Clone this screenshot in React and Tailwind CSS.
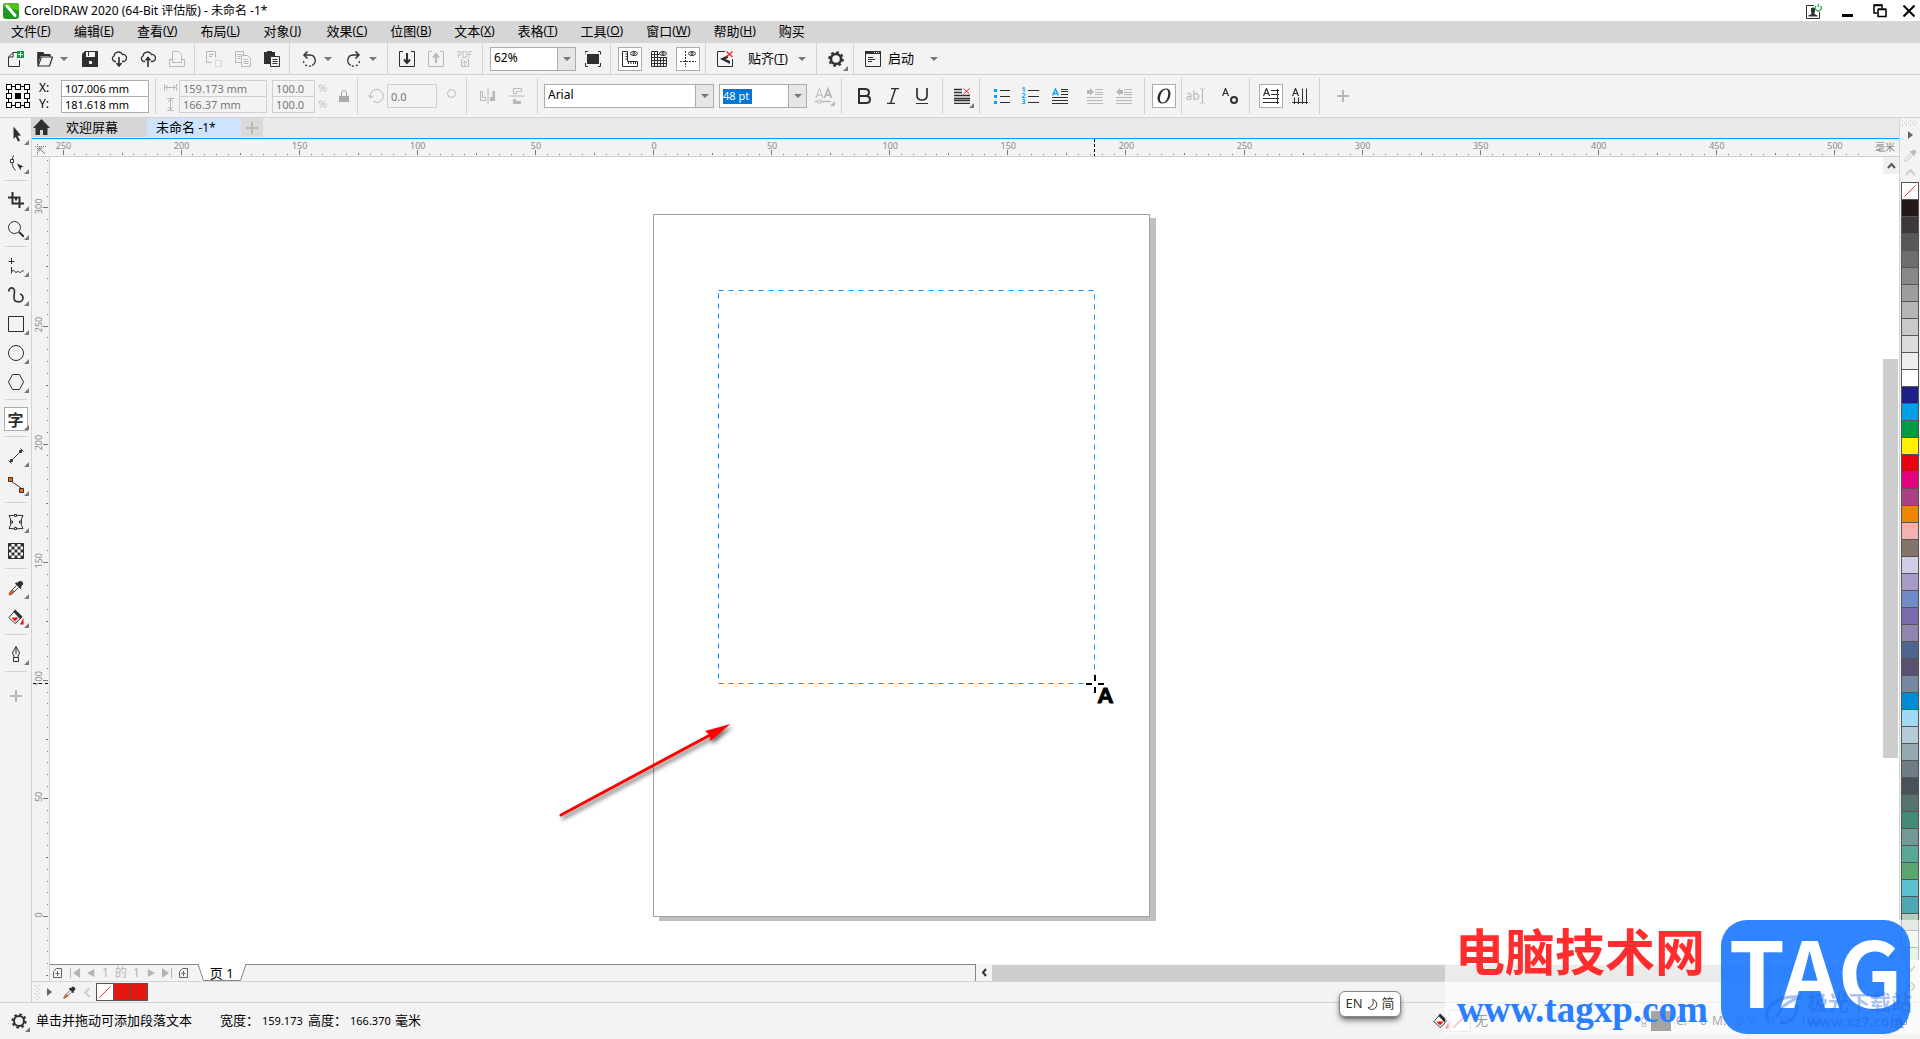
import React from 'react'

const fontStack = "font-['Noto_Sans','Noto_Sans_CJK_SC',sans-serif]"

const menus = [
  ['文件', 'F'], ['编辑', 'E'], ['查看', 'V'], ['布局', 'L'], ['对象', 'J'], ['效果', 'C'], ['位图', 'B'],
  ['文本', 'X'], ['表格', 'T'], ['工具', 'O'], ['窗口', 'W'], ['帮助', 'H'], ['购买', null],
]

const palette = [
  '#231a16', '#3e3838', '#595757', '#6e6e6d', '#888888', '#9d9f9e', '#b4b6b5', '#c8cac9', '#dcdcdc', '#eeeeee',
  '#ffffff', '#1d2087', '#00a0e9', '#009944', '#fff100', '#e60012', '#e4007f', '#ae3f83', '#ef8500', '#f3b1b1',
  '#85746a', '#d0cde6', '#a69ac9', '#718bc6', '#7b6aad', '#9085ac', '#50648f', '#5b516e', '#75889f', '#008bd8',
  '#9fd9f6', '#b5cbd8', '#97a9b1', '#6f7e86', '#4a5259', '#57736f', '#438a78', '#719a96', '#57a896', '#5ba570',
  '#5ec1d0', '#4ea8b3', '#b9cdbc', '#dcefe0', '#c4e3c4', '#a8d08d',
]

const Ico = ({ children, size = 16, box = 16, className = 'text-[#2f2f2f]' }) => (
  <svg
    width={size}
    height={size}
    viewBox={`0 0 ${box} ${box}`}
    fill="none"
    stroke="currentColor"
    strokeWidth="1"
    className={`shrink-0 ${className}`}
    aria-hidden="true"
  >
    {children}
  </svg>
)

const Dim = (props) => <Ico {...props} className="text-[#b8b8b8]" />

const Gear = ({ cx = 8, cy = 8, r = 5, w = 3 }) => (
  <g>
    <circle cx={cx} cy={cy} r={r} strokeWidth={w} />
    <circle cx={cx} cy={cy} r={r + w / 2 + 0.6} strokeWidth="2" strokeDasharray={`${((r + w / 2 + 0.6) * Math.PI) / 8}`} />
  </g>
)

const Btn = ({ label, boxed, children }) => (
  <button type="button" aria-label={label} className="flex h-[29px] w-[29px] shrink-0 items-center justify-center">
    {boxed ? (
      <span className="flex h-6 w-6 items-center justify-center border border-[#acacac] bg-white">{children}</span>
    ) : children}
  </button>
)

const Caret = ({ label = '展开' }) => (
  <button type="button" aria-label={label} className="flex h-6 w-4 shrink-0 items-center pl-px">
    <CaretGlyph />
  </button>
)

const CaretGlyph = () => (
  <svg width="8" height="4" viewBox="0 0 8 4" className="fill-[#777]" aria-hidden="true"><path d="M0 0h8L4 4z" /></svg>
)

const Corner = ({ className }) => (
  <svg width="5" height="5" viewBox="0 0 4 4" className={`absolute fill-[#777] ${className}`} aria-hidden="true"><path d="M4 0v4H0z" /></svg>
)

const Sep = () => <span className="mr-1 ml-[3px] w-px shrink-0 self-stretch bg-[#d4d4d4]" />

const Eyedropper = ({ dim }) => (
  <>
    <path d="M10 2.500c1.500-3 6-1 5 2l-2 2 .5 1.500-1 1-5.500-5.500 1-1z" fill={dim ? '#bbb' : '#2f2f2f'} stroke="none" />
    <path d="M8.500 5.500L2 12l-1 3 3-1 6.500-6.500" stroke={dim ? '#bbb' : '#444'} />
    {!dim && <path d="M5.500 10.500L1.500 14.500" stroke="#d9641e" strokeWidth="2.200" />}
  </>
)

const Bucket = () => (
  <>
    <path d="M7 1.500L1 8.500l6 6 7-6.500z" fill="#fff" />
    <path d="M7 .5l7.500 7-2.500 2.500L5.500 3z" fill="#2f2f2f" stroke="none" />
    <path d="M3.500 8.500h7L7 12.500z" fill="#f00" stroke="none" />
    <path d="M15.500 9v6.500h-3.500z" fill="#f00" stroke="none" />
  </>
)

const tools = [
  ['选择', <path key="a" d="M5.500 .5l7.500 9-3.500.3 2.500 4.700-2 1-2.300-4.800-2.200 2.300z" fill="currentColor" stroke="none" />],
  ['形状', (
    <g key="b">
      <path d="M5.500 .5C3 6 3.500 11 7.500 15.500" />
      <path d="M2.500 4.500h3v3h-3z" fill="#fff" />
      <path d="M9 8.500l6.500 3-2.500 1-.5 3z" fill="currentColor" stroke="none" />
    </g>
  )],
  null,
  ['裁剪', <path key="c" d="M4.500 0v11.500H16M0 5.500h11.500V16M8 5.500v3" strokeWidth="2" />],
  ['缩放', <g key="d"><circle cx="6.500" cy="6.500" r="6" /><path d="M11 11l5 5" strokeWidth="2" /></g>],
  null,
  ['手绘', <path key="e" d="M3.500 0v6M.5 3.500h6M3.500 9v6.500M3.500 14q2-3.500 3-1t2.500 1 2 0 2.500-.5 2.500 0" />],
  ['艺术笔', <path key="f" d="M1 4.500C0 0 6.500-.5 6.500 4c0 2-.5 4-.5 6.500 0 6 9 5.500 9 .5 0-2-1-3.500-3-4" strokeWidth="1.600" />],
  ['矩形', <path key="g" d="M.5.5h15v15H.5z" />],
  ['椭圆形', <circle key="h" cx="8" cy="8" r="7.500" />],
  ['多边形', <path key="i" d="M4.500 .5h7L15.500 8l-4 7.500h-7L.5 8z" />],
  null,
  ['文本', null],
  null,
  ['平行度量', <path key="k" d="M3 13L13 3M.5 12.500l3 3M12.500.5l3 3M2 14l3-1-2-2zM14 2l-3 1 2 2z" />],
  ['连接器', (
    <g key="l">
      <path d="M3 4l10 7" />
      <path d="M.5.5h4v4h-4zM11.500 11.500h4v4h-4z" fill="#f60" />
    </g>
  )],
  null,
  ['变形', (
    <g key="m">
      <path d="M1 1.500q7-.5 14 0-4 6.500 0 13-7 .5-14 0 4-6.500 0-13z" />
      <path d="M6.500.5h2v2h-2zM6.500 13.500h2v2h-2zM2.500 7h2v2h-2zM11.500 7h2v2h-2z" fill="#fff" />
    </g>
  )],
  ['透明度', (
    <g key="n">
      <path d="M.5.5h15v15H.5z" fill="#fff" />
      {[0, 1, 2, 3, 4].map((r) => [0, 1, 2, 3, 4].map((c) => (r + c) % 2 === 0 && (
        <path key={`${r}${c}`} d={`M${0.5 + c * 3} ${0.5 + r * 3}h3v3h-3z`} fill="currentColor" stroke="none" />
      )))}
    </g>
  )],
  null,
  ['颜色滴管', <Eyedropper key="o" />],
  ['交互式填充', <Bucket key="p" />],
  null,
  ['轮廓笔', <path key="q" d="M8 .5L4.500 7 6.500 11.500h3L11.500 7zM8 2v6M5.500 11.500h5v4h-5z" />],
  null,
]

const Toolbox = () => (
  <div className="flex w-8 shrink-0 flex-col items-center border-r border-[#d4d4d4] bg-[#f3f3f3] pt-px">
    {tools.map((tool, i) => tool ? (
      <button key={tool[0]} type="button" aria-label={tool[0]} className="relative flex h-[29px] w-[29px] shrink-0 items-center justify-center">
        {tool[1] ? <Ico>{tool[1]}</Ico> : (
          <span className="flex h-6 w-6 items-center justify-center border border-[#acacac] bg-white font-['Noto_Sans_CJK_SC',sans-serif] text-base leading-none font-bold text-[#2f2f2f]">字</span>
        )}
        {tool[0] !== '透明度' && <Corner className="right-px bottom-[3px]" />}
      </button>
    ) : <span key={i} className="mt-[3px] mb-1 h-px w-[22px] shrink-0 bg-[#d4d4d4]" />)}
    <button type="button" aria-label="添加工具" className="mt-[5px] flex h-[29px] items-center">
      <Dim><path d="M8 2v12M2 8h12" strokeWidth="2" /></Dim>
    </button>
  </div>
)

const TitleBar = () => (
  <header className="flex h-[21px] shrink-0 items-center bg-white pr-[5px] pl-[3px]">
    <svg width="16" height="16" viewBox="0 0 16 16" aria-hidden="true">
      <rect width="16" height="16" rx="3" fill="#1f9a20" />
      <path d="M0 3q0-3 3-3h10q3 0 3 3v5z" fill="#4cc21c" />
      <path d="M4 3l8 9.500" stroke="#fff" strokeWidth="3" strokeLinecap="round" />
    </svg>
    <h1 className="ml-[5px] text-xs">CorelDRAW 2020 (64-Bit 评估版) - 未命名 -1*</h1>
    <div className="ml-auto flex items-center">
      <button type="button" aria-label="账户" className="mr-5">
        <Ico>
          <path d="M8 2.500H.5v13h13V9" />
          <path d="M5 5.500q2-2 4 0v3L8.500 10v1l3 1.500v1h-9v-1l3-1.500v-1L5 8.500z" fill="currentColor" stroke="none" />
          <path d="M10 3a3 3 0 1 0 4.500 0M12.300 1v3" stroke="#2fa84f" strokeWidth="1.300" />
        </Ico>
      </button>
      <button type="button" aria-label="最小化" className="mr-5 flex h-4 items-end"><span className="mb-[2px] h-[3px] w-[11px] bg-black" /></button>
      <button type="button" aria-label="还原" className="mr-4">
        <Ico size={14} box={14} className="text-black"><path d="M4.500 9H1V1h8v3.500" strokeWidth="1.500" /><path d="M5 5.500h8v7H5zM5 5h8M1 1.500h8" strokeWidth="1.500" /></Ico>
      </button>
      <button type="button" aria-label="关闭"><Ico size={12} box={12} className="text-black"><path d="M.5.5l11 11M11.500.5l-11 11" strokeWidth="2" /></Ico></button>
    </div>
  </header>
)

const MenuBar = () => (
  <nav className="flex h-[22px] shrink-0 items-start gap-[23px] bg-[#d6d6d6] pl-[11px]">
    {menus.map(([name, key]) => (
      <button key={name} type="button" className="flex min-w-[40px] items-center text-[13px] leading-5">
        {name}{key && <span className="text-xs leading-5">(<u>{key}</u>)</span>}
      </button>
    ))}
  </nav>
)

const StandardBar = () => (
  <div className="flex h-8 shrink-0 items-center border-b border-[#d4d4d4] bg-[#f3f3f3] pl-px">
    <Btn label="新建">
      <Ico><path d="M9 1.500H5L.5 6v9.500h11V9M5 1.500V6H1" /><path d="M9 0h7v7H9z" fill="#0a9b33" stroke="none" /><path d="M12.500 1v5M10 3.500h5" stroke="#fff" /></Ico>
    </Btn>
    <Btn label="打开"><Ico><path d="M1 14.500V1.500h5l1 2h6v2.500M1 15L4.500 6H15.500L12.500 15z" strokeWidth="1.200" /><path d="M.5 1h5l1 2h6.500v2H4L.5 13z" fill="currentColor" stroke="none" /></Ico></Btn>
    <Caret />
    <Btn label="保存"><Ico><path d="M3 0h13v16H0V3z" fill="currentColor" stroke="none" /><path d="M4 1h9v5H4zM7 10h3v3H7z" fill="#f3f3f3" stroke="none" /><path d="M6.500 1v4" /></Ico></Btn>
    <Btn label="从云下载"><Ico><path d="M5 10.500H3.500A3 3 0 0 1 3 5a4.500 4.500 0 0 1 8.500-1.500A3.500 3.500 0 0 1 12.500 10.500H11" strokeWidth="1.300" /><path d="M8 6v9M5.500 12L8 15l2.500-3" strokeWidth="1.600" /></Ico></Btn>
    <Btn label="保存到云"><Ico><path d="M5 10.500H3.500A3 3 0 0 1 3 5a4.500 4.500 0 0 1 8.500-1.500A3.500 3.500 0 0 1 12.500 10.500H11" strokeWidth="1.300" /><path d="M8 7v9M5.500 9.500L8 6.500l2.500 3" strokeWidth="1.600" /></Ico></Btn>
    <Btn label="打印"><Dim><path d="M3.500 9.500v-9h6l3 3v6M.5 8.500h3v3h9v-3h3v7H.5z" /></Dim></Btn>
    <Sep />
    <Btn label="剪切"><Dim><path d="M.5.500h9v6M.5.500v11h5M3 3.500h5M3 5.500h3" /><path d="M9.500 9.500h6v6h-6z" strokeDasharray="1 1" /></Dim></Btn>
    <Btn label="复制"><Dim><path d="M6 11.500H.5V.500h8V4M2.500 3.500h4M2.500 5.500h3M2.500 7.500h3M6.500 4.500h6l3 3v8h-9zM8.500 8.500h4M8.500 10.500h5M8.500 12.500h5" /></Dim></Btn>
    <Btn label="粘贴"><Ico><path d="M0 1h3V0h5v1h3v4H6v8H0z" fill="currentColor" stroke="none" /><path d="M6.500 5.500h9v10h-9zM8.500 8.500h5M8.500 10.500h5M8.500 12.500h5" fill="#f3f3f3" /></Ico></Btn>
    <Sep />
    <Btn label="撤消"><Ico><path d="M3.500 4H9a5.500 5.500 0 0 1 2 10.500" strokeWidth="1.300" /><path d="M10 15a6 6 0 0 1-7.500-7" strokeWidth="1.300" strokeDasharray="2 2" /><path d="M6.500 .5L3 4l3.500 3.500" strokeWidth="1.500" /></Ico></Btn>
    <Caret />
    <Btn label="重做"><Ico><path d="M12.500 4H7a5.500 5.500 0 0 0-2 10.500" strokeWidth="1.300" /><path d="M6 15a6 6 0 0 0 7.500-7" strokeWidth="1.300" strokeDasharray="2 2" /><path d="M9.500 .5L13 4 9.500 7.500" strokeWidth="1.500" /></Ico></Btn>
    <Caret />
    <Sep />
    <Btn label="导入"><Ico><path d="M4 .5H.5v15h15V.5H12" /><path d="M8 2v9M5 8.500L8 12l3-3.500" strokeWidth="2" /></Ico></Btn>
    <Btn label="导出"><Dim><path d="M4 .5H.5v15h15V.5H12" /><path d="M8 12V4M5 6.500L8 3l3 3.500" strokeWidth="2" /></Dim></Btn>
    <Btn label="发布为 PDF">
      <span className="flex flex-col items-center text-[8px] leading-[8px] text-[#b8b8b8]">PDF
        <Dim size={8} box={8}><path d="M2 .5H.5v7h7v-7H6M4 7V2M2 4l2-2 2 2" /></Dim>
      </span>
    </Btn>
    <Sep />
    <div className="relative mr-[2px] ml-[3px] h-6 w-[86px] border border-[#acacac] bg-white">
      <select aria-label="缩放级别" defaultValue="62%" className="block h-5 w-full appearance-none bg-transparent pl-[3px] text-xs">
        <option>62%</option>
        <option>100%</option>
      </select>
      <span className="pointer-events-none absolute inset-y-0 right-0 flex w-[18px] items-center justify-center border-l border-[#acacac] bg-[#e6e6e6]"><CaretGlyph /></span>
    </div>
    <Btn label="全屏预览"><Ico><path d="M0 3.500V.5h3M13 .5h2.500v3M15.500 12v3.500H13M3 15.500H.5V12" /><path d="M2 3h12v10H2z" fill="currentColor" stroke="none" /></Ico></Btn>
    <Sep />
    <Btn label="显示标尺" boxed><Ico><path d="M.5.500h5v10h10v5H.5zM3.500 3h2M3.500 5.500h2M3.500 8h2M6.500 13v-2.500M9 13v-2.500M11.500 13v-2.500M13.500 13v-2.500" /><ellipse cx="12" cy="2.500" rx="3.500" ry="2" /><circle cx="12" cy="2.500" r="1" /></Ico></Btn>
    <Btn label="显示网格"><Ico><path d="M7 .500H.5v15h15V6M.5 3.500H8M.5 6.500h15M.5 9.500h15M.5 12.500h15M3.500.500v15M6.500.500v15M9.500 6v9M12.500 6v9" /><ellipse cx="12" cy="2.500" rx="3.500" ry="2" /><circle cx="12" cy="2.500" r="1" /></Ico></Btn>
    <Btn label="显示辅助线" boxed><Ico><path d="M5.500 0v16M0 10.500h16" strokeDasharray="2 1" /><ellipse cx="12" cy="2.500" rx="3.500" ry="2" /><circle cx="12" cy="2.500" r="1" /></Ico></Btn>
    <Sep />
    <Btn label="贴齐关闭"><Ico><path d="M8 .5H.5v15h15V8" /><path d="M3 8l8-4v3L8.500 8 13 10v3z" fill="currentColor" stroke="none" /><path d="M9.500.500l6 5.500M15.500.500l-6 5.500" stroke="#e22" strokeWidth="1.300" /></Ico></Btn>
    <button type="button" className="flex w-[58px] items-center pl-[9px] text-[13px] whitespace-nowrap">贴齐<span className="text-xs">(<u>T</u>)</span></button>
    <Caret />
    <Sep />
    <Btn label="选项"><span className="relative"><Ico><Gear r={5} w={2.5} /></Ico><Corner className="-right-1 -bottom-1" /></span></Btn>
    <Sep />
    <Btn label="应用程序启动器"><Ico><path d="M.5.500h15v15H.5zM3 6.500h5M3 8.500h7M3 10.500h4" /><path d="M0 0h16v3H0z" fill="currentColor" stroke="none" /><path d="M9 1.500h1M11 1.500h1M13 1.500h1" stroke="#fff" /></Ico></Btn>
    <button type="button" className="w-[42px] pl-px text-left text-[13px] whitespace-nowrap">启动</button>
    <Caret />
  </div>
)

const PairInput = ({ rows, width, dim }) => (
  <div className="flex flex-col">
    {rows.map(([label, value], i) => (
      <input
        key={label}
        aria-label={label}
        defaultValue={value}
        className={`h-[17px] border pl-[3px] text-[11px] leading-4 ${i ? '-mt-px' : ''} ${width} ${dim ? 'border-[#d0d0d0] bg-[#f3f3f3] text-[#777]' : 'border-[#acacac] bg-white text-black'}`}
      />
    ))}
  </div>
)

const lines = (x1, x2, ys) => ys.map((y) => `M${x1} ${y}H${x2}`).join('')

const PropertyBar = () => (
  <div className="flex h-[43px] shrink-0 items-center border-b border-[#d4d4d4] bg-[#f3f3f3] py-[3px] pl-[6px]">
    <Ico size={24} box={24} className="text-black">
      <path d="M5 2.500h5M14 2.500h5M5 21.500h5M14 21.500h5M2.500 5v5M2.500 14v5M21.500 5v5M21.500 14v5" />
      {[0.5, 9.5, 18.5].map((x) => [0.5, 9.5, 18.5].map((y) => (
        <rect key={`${x}-${y}`} x={x} y={y} width="5" height="5" fill={x === 9.5 && y === 9.5 ? '#000' : '#fff'} />
      )))}
    </Ico>
    <div className="ml-[9px] w-[22px] text-xs leading-4"><p>X:</p><p>Y:</p></div>
    <PairInput width="w-[88px]" rows={[['X 坐标', '107.006 mm'], ['Y 坐标', '181.618 mm']]} />
    <span className="ml-[3px]" /><Sep />
    <div className="mr-[2px] ml-1 flex flex-col gap-1">
      <Dim size={13} box={13}><path d="M.5 3v7M12.500 3v7M1 6.500h11M4 4L1.500 6.500 4 9M9 4l2.500 2.500L9 9" /></Dim>
      <Dim size={13} box={13}><path d="M3 .5h7M3 12.500h7M6.500 1v11M4 4l2.500-2.500L9 4M4 9l2.500 2.500L9 9" /></Dim>
    </div>
    <PairInput dim width="w-[88px]" rows={[['宽度', '159.173 mm'], ['高度', '166.37 mm']]} />
    <span className="w-[5px]" />
    <PairInput dim width="w-[43px]" rows={[['水平缩放', '100.0'], ['垂直缩放', '100.0']]} />
    <div className="ml-[3px] w-5 text-[11px] leading-4 text-[#c4c4c4]"><p>%</p><p>%</p></div>
    <button type="button" aria-label="锁定比率" className="mr-1 w-3"><Ico size={12} box={12} className="text-[#aaa]"><path d="M3.500 6V3q0-2.500 2.500-2.500T8.500 3v3" /><path d="M1 6h10v6H1z" fill="currentColor" stroke="none" /></Ico></button>
    <Sep />
    <span className="ml-[5px]"><Dim size={18} box={18}><path d="M3.500 10.500a6.500 6.500 0 1 1 3 4" /><path d="M1 8l2.500 3L7 8.500" /></Dim></span>
    <input aria-label="旋转角度" defaultValue="0.0" className="ml-[2px] h-6 w-[50px] border border-[#d0d0d0] bg-[#f3f3f3] pl-[3px] text-[11px] text-[#777]" />
    <Dim size={29} box={29}><circle cx="14.500" cy="11.500" r="4" /></Dim>
    <span className="-ml-[3px]" /><Sep />
    <Btn label="水平镜像"><span className="ml-1"><Dim><path d="M.5 3.500h2v6h3v3h-5zM8 0v16" /><path d="M15 3h-2.500v6H10v4h5z" fill="currentColor" stroke="none" /></Dim></span></Btn>
    <Btn label="垂直镜像"><span className="ml-1"><Dim><path d="M12.500.5h-8v5h3v-2h5zM0 8h16" /><path d="M12 16H4v-5h3v2h5z" fill="currentColor" stroke="none" /></Dim></span></Btn>
    <span className="w-[5px]" /><Sep />
    <div className="relative ml-[2px] h-6 w-[170px] border border-[#acacac] bg-white">
      <select aria-label="字体列表" defaultValue="Arial" className="block h-5 w-full appearance-none bg-transparent pl-[3px] text-xs">
        <option>Arial</option>
        <option>Times New Roman</option>
      </select>
      <span className="pointer-events-none absolute inset-y-0 right-0 flex w-[18px] items-center justify-center border-l border-[#acacac] bg-[#e6e6e6]"><CaretGlyph /></span>
    </div>
    <div className="ml-[5px] flex h-6 w-[88px] items-center justify-between border border-[#acacac] bg-white pl-[3px]">
      <input aria-label="字体大小" defaultValue="48 pt" className="h-[15px] w-[29px] bg-[#0078d7] text-[11px] leading-4 text-white" />
      <button type="button" aria-label="字体大小列表" className="flex h-full w-[18px] items-center justify-center border-l border-[#acacac] bg-[#e6e6e6]"><CaretGlyph /></button>
    </div>
    <span className="ml-2"><Dim size={20} box={20}><path d="M1 12L4.500 2.500 8 12M2 9h5" /><path d="M9.500 12L13 3l3.500 9M11 9h4" strokeWidth="2" /><path d="M0 15.500h16" strokeWidth="1.500" /><circle cx="4.500" cy="15.500" r="1.800" fill="#f3f3f3" /><path d="M20 15v5h-5z" fill="currentColor" stroke="none" /></Dim></span>
    <span className="ml-[3px]" /><Sep />
    <span className="w-[3px]" />
    <Btn label="粗体"><Ico><path d="M3 1h6q4 0 4 3.500T9 8H3zM3 8h7q4 0 4 3.500T10 15H3z" strokeWidth="2" /></Ico></Btn>
    <Btn label="斜体"><Ico><path d="M6 .5h8M2 15.500h8M10.500.5l-5 15" strokeWidth="1.500" /></Ico></Btn>
    <Btn label="下划线"><Ico><path d="M3 0v7.500q0 4.500 5 4.500t5-4.500V0" strokeWidth="1.700" /><path d="M2 15.500h12" /></Ico></Btn>
    <span className="w-[3px]" /><Sep />
    <Btn label="文本对齐">
      <span className="relative"><Ico><path d={lines(0, 8, [1.5, 4.5]) + lines(0, 16, [7.5, 10.5, 12.5, 15.5])} strokeWidth="1.300" /><path d="M9.500.500l6 5.500M15.500.500l-6 5.500" stroke="#e22" /></Ico>
        <Corner className="-right-1 -bottom-1" /></span>
    </Btn>
    <Sep />
    <span className="w-[3px]" />
    <Btn label="项目符号列表"><Ico><path d={lines(6, 16, [2.5, 8.5, 14.5])} /><path d="M0 1h3v3H0zM0 7h3v3H0zM0 13h3v3H0z" fill="#00a2ff" stroke="none" /></Ico></Btn>
    <Btn label="编号列表">
      <span className="flex items-center gap-[2px]">
        <span className="flex flex-col text-[7px] leading-[6px] font-bold text-[#00a2ff]"><span>1</span><span>2</span><span>3</span></span>
        <Ico size={16} className="-mr-1 text-[#2f2f2f]"><path d={lines(0, 11, [2.5, 8.5, 14.5])} /></Ico>
      </span>
    </Btn>
    <Btn label="首字下沉"><Ico><path d={lines(9, 16, [1.5, 3.5, 6.5]) + lines(0, 16, [9.5, 12.5, 15.5])} strokeWidth="1.200" /><path d="M.5 7.500L3.500 1l3 6.500M1.500 5.500h4" stroke="#00a2ff" strokeWidth="1.300" /></Ico></Btn>
    <span className="w-[6px]" />
    <Btn label="增加缩进"><Dim><path d={lines(8, 16, [1.5, 4.5, 6.5]) + lines(0, 16, [9.5, 12.5, 15.5])} /><path d="M0 2h3V0l4 4-4 3.500V6H0z" fill="currentColor" stroke="none" /></Dim></Btn>
    <Btn label="减少缩进"><Dim><path d={lines(8, 16, [1.5, 4.5, 6.5]) + lines(0, 16, [9.5, 12.5, 15.5])} /><path d="M7 2H4V0L0 4l4 3.500V6h3z" fill="currentColor" stroke="none" /></Dim></Btn>
    <span className="w-[3px]" /><Sep />
    <Btn label="OpenType" boxed><Ico><path fillRule="evenodd" d="M10 .5c3 0 4.500 2 4.500 5C14.500 11 11 15.500 6.500 15.500c-3 0-5-2-5-5C1.500 5 5.500.5 10 .5zM9.800 1.500C6.500 1.500 4 7 4 11c0 2.300 1 3.500 2.700 3.500 3.300 0 5.500-5 5.500-9.500 0-2.300-.8-3.500-2.400-3.500z" fill="currentColor" stroke="none" /></Ico></Btn>
    <Sep />
    <Btn label="编辑文本"><span className="flex items-center text-xs text-[#b8b8b8]">ab<Dim size={16} box={16}><path d="M2.500 1v14M.5.500l2 1 2-1M.5 15.500l2-1 2 1" /></Dim></span></Btn>
    <Btn label="文本属性"><Ico><path d="M.5 8L3.500.500 6.500 8M1.500 5.500h4" strokeWidth="1.200" /><circle cx="12" cy="12" r="3" strokeWidth="2" /></Ico></Btn>
    <span className="w-[2px]" /><Sep />
    <span className="w-[2px]" />
    <Btn label="水平文本" boxed><Ico><path d="M.5 8L3.500.500 6.500 8M1.500 5.500h4" strokeWidth="1.200" /><path d={lines(8, 16, [2.5, 6.5]) + lines(0, 16, [10.5, 14.5]) + 'M14.500 1v15'} /></Ico></Btn>
    <Btn label="垂直文本"><Ico><path d="M.5 8L3.500.500 6.500 8M1.500 5.500h4" strokeWidth="1.200" /><path d="M10.500.5V16M14.500.5V16M2.500 9.500V16M6.500 9.500V16M0 14.500h16" /></Ico></Btn>
    <span className="w-[2px]" /><Sep />
    <button type="button" aria-label="自定义" className="ml-3"><Dim size={14} box={14}><path d="M7 1v12M1 7h12" strokeWidth="2" /></Dim></button>
  </div>
)

const DocTabs = () => (
  <div className="flex h-5 shrink-0 border-b border-[#e9e9e9] bg-[#e9e9e9] text-[13px] leading-[19px]">
    <button type="button" className="flex w-[115px] items-center gap-4 bg-[#d6d6d6] pl-px whitespace-nowrap">
      <Ico size={17} box={17}><path d="M8.500 0L17 9h-2.500v7H10v-5H7v5H2.500V9H0z" fill="currentColor" stroke="none" /></Ico>
      欢迎屏幕
    </button>
    <button type="button" className="w-[94px] bg-[#cfe3ff] pl-[9px] text-left whitespace-nowrap">未命名 <span className="text-xs">-1*</span></button>
    <button type="button" aria-label="新文档" className="flex w-[22px] items-center justify-center bg-[#dadada]"><Dim size={12} box={12}><path d="M6 0v12M0 6h12" strokeWidth="2" /></Dim></button>
  </div>
)

const STEP = 118.1
// ruler marks run every 5 mm, with a longer one at 25 and 50
const hMarks = Array.from({ length: 157 }, (_, i) => i - 50)
const vMarks = Array.from({ length: 72 }, (_, i) => i - 6)

const TopRuler = () => (
  <div className="flex h-[19px] shrink-0 border-t border-b border-t-[#00a2ff] border-b-[#d0d0d0] bg-[#f3f3f3]">
    <span className="flex w-[18px] shrink-0 items-center pt-1 pl-[3px]">
      <Ico size={11} box={11} className="text-[#777]"><path d="M0 2.500h11M2.500 0v11" strokeDasharray="1 1" /><path d="M4 4l6 6M4 7.500V4h3.500" /></Ico>
    </span>
    <svg className="h-[17px] min-w-0 flex-1 text-[9px]" aria-hidden="true">
      {hMarks.map((m) => {
        const x = Math.round(603 + (m * STEP) / 10)
        const len = m % 10 === 0 ? 5 : m % 5 === 0 ? 2 : 1
        return <rect key={m} x={x} y={16 - len} width="1" height={len} fill="#777" />
      })}
      {hMarks.filter((m) => m % 10 === 0 && m < 105).map((m) => (
        <text key={m} x={604 + (m * STEP) / 10} y="10" textAnchor="middle" fill="#888">{Math.abs(m * 5)}</text>
      ))}
      <path d="M1044.500 0v17" stroke="#000" strokeDasharray="3 2" />
    </svg>
    <span className="w-[30px] shrink-0 pl-[6px] text-[10px] leading-4 whitespace-nowrap text-[#888]">毫米</span>
  </div>
)

const LeftRuler = () => (
  <svg className="h-full w-[18px] shrink-0 border-r border-[#d0d0d0] bg-[#f3f3f3] text-[9px]" aria-hidden="true">
    {vMarks.map((m) => {
      const y = Math.round(759 - (m * STEP) / 10)
      const len = m % 10 === 0 ? 5 : m % 5 === 0 ? 2 : 1
      return <rect key={m} x={16 - len} y={y} width={len} height="1" fill="#777" />
    })}
    {vMarks.filter((m) => m % 10 === 0).map((m) => {
      const y = 758 - (m * STEP) / 10
      return <text key={m} x="10" y={y} transform={`rotate(-90 10 ${y})`} textAnchor="middle" fill="#888">{m * 5}</text>
    })}
    <path d="M1 526.500h16" stroke="#000" strokeDasharray="3 3" />
  </svg>
)

const Canvas = () => (
  <div className="relative min-w-0 flex-1 overflow-hidden bg-white">
    <div className="absolute top-[61px] left-[609px] h-[703px] w-[497px] bg-[#bfbfbf]" />
    <div className="absolute top-[57px] left-[603px] h-[703px] w-[497px] border border-[#a0a0a0] bg-white" />
    <svg className="absolute inset-0 h-full w-full" aria-hidden="true">
      <defs>
        <filter id="soft" x="-20%" y="-20%" width="150%" height="150%">
          <feDropShadow dx="2" dy="3" stdDeviation="2" floodColor="#000" floodOpacity="0.6" />
        </filter>
      </defs>
      <rect x="668.500" y="133.500" width="376" height="393" fill="none" stroke="#0a90ff" strokeDasharray="5 5" />
      <circle cx="1045" cy="527" r="9" fill="#fff" />
      <path d="M1036 527h6M1048 527h6M1045 518v6M1045 530v6" stroke="#000" strokeWidth="2" />
      <text x="1048" y="546" fontSize="21" fontWeight="900" stroke="#000" strokeWidth="1" className="font-['Lato','Noto_Sans',sans-serif]">A</text>
      <g filter="url(#soft)">
        <path d="M511 658L662 577" stroke="#f00" strokeWidth="3" strokeLinecap="round" />
        <path d="M680.500 567L655 574l5 4 .5 6z" fill="#f00" />
      </g>
    </svg>
  </div>
)

const Chevron = ({ d, className }) => <Ico size={9} box={9} className={className}><path d={d} strokeWidth="2" /></Ico>

const PageBar = () => (
  <div className="flex h-[17px] shrink-0 items-stretch">
    <div className="flex w-[926px] shrink-0 border-t border-r border-[#888] bg-[#f3f3f3] pl-[3px]">
      <div className="flex items-center gap-[7px] text-[#b4b4b4]">
        <button type="button" aria-label="在前面添加页"><Ico size={10} box={10} className="text-[#666]"><path d="M3.500.5h5v9h-8v-6zM4.500 3v5M2.500 5.500h4" /></Ico></button>
        <button type="button" aria-label="第一页"><Ico size={10} box={10} className="text-[#b4b4b4]"><path d="M.5 0v10" /><path d="M10 0v10L3 5z" fill="currentColor" stroke="none" /></Ico></button>
        <button type="button" aria-label="上一页"><Ico size={8} box={10} className="text-[#b4b4b4]"><path d="M9 0v10L0 5z" fill="currentColor" stroke="none" /></Ico></button>
        <span className="flex gap-[6px] text-xs leading-4"><span>1</span><span>的</span><span>1</span></span>
        <button type="button" aria-label="下一页"><Ico size={8} box={10} className="text-[#b4b4b4]"><path d="M1 0v10l9-5z" fill="currentColor" stroke="none" /></Ico></button>
        <button type="button" aria-label="最后一页"><Ico size={10} box={10} className="text-[#b4b4b4]"><path d="M9.500 0v10" /><path d="M0 0v10l7-5z" fill="currentColor" stroke="none" /></Ico></button>
        <button type="button" aria-label="在后面添加页"><Ico size={10} box={10} className="text-[#666]"><path d="M3.500.5h5v9h-8v-6zM4.500 3v5M2.500 5.500h4" /></Ico></button>
      </div>
      <button type="button" className="relative -mt-px ml-[9px] h-[17px] w-12 text-[13px] leading-[14px]">
        <svg width="48" height="17" viewBox="0 0 48 17" className="absolute inset-0" aria-hidden="true">
          <path d="M0 0L5.500 16.500H42.500L48 0" fill="#fff" stroke="#888" />
        </svg>
        <span className="relative">页 1</span>
      </button>
    </div>
    <div className="flex min-w-0 flex-1 items-center bg-[#f3f3f3]">
      <button type="button" aria-label="向左滚动" className="flex w-4 shrink-0 items-center justify-center"><Chevron d="M6 1L3 4.500 6 8" className="text-[#333]" /></button>
      <span className="h-4 w-[868px] min-w-0 bg-[#cdcdcd]" />
      <button type="button" aria-label="向右滚动" className="ml-auto flex w-4 shrink-0 items-center justify-center"><Chevron d="M3 1l3 3.500L3 8" className="text-[#333]" /></button>
      <button type="button" aria-label="导航器" className="flex w-4 shrink-0 items-center justify-center"><Ico size={12} className="text-[#333]"><circle cx="6.500" cy="6.500" r="5.500" /><path d="M10.500 10.500l5 5M4 6.500h5M6.500 4v5" /></Ico></button>
    </div>
  </div>
)

const NoColour = ({ className }) => (
  <svg viewBox="0 0 16 16" className={`bg-white ${className}`} aria-hidden="true"><path d="M2.500 13.500l11-11" stroke="#e33" /></svg>
)

const DocumentPalette = () => (
  <div className="flex h-[21px] shrink-0 items-center border-t border-[#d4d4d4] bg-[#f3f3f3] pl-[2px]">
    <svg width="6" height="16" aria-hidden="true"><path d="M1 1v15M5 1v15M3 3v13" stroke="#bbb" strokeDasharray="1 3" /></svg>
    <svg width="5" height="8" className="ml-[7px] fill-[#666]" aria-hidden="true"><path d="M0 0l5 4-5 4z" /></svg>
    <button type="button" aria-label="滴管" className="ml-[11px]"><Ico size={13}><Eyedropper /></Ico></button>
    <Chevron d="M7 0L2 4.500 7 9" className="mr-1 ml-[7px] text-[#ccc]" />
    <div className="flex h-[18px] border border-[#555]">
      <NoColour className="h-4 w-4" />
      <span className="w-[17px] border-l border-[#555] bg-[#e61610]" />
      <span className="w-[17px] border-l border-[#555] bg-[#e61610]" />
    </div>
  </div>
)

const ColourPalette = () => (
  <aside className="flex w-[21px] shrink-0 flex-col items-center border-l border-[#d4d4d4] bg-[#f3f3f3]">
    <svg width="16" height="6" className="mt-[2px] shrink-0" aria-hidden="true"><path d="M0 1h16M0 5h16M2 3h14" stroke="#bbb" strokeDasharray="1 3" /></svg>
    <svg width="5" height="8" className="mt-[5px] shrink-0 fill-[#666]" aria-hidden="true"><path d="M0 0l5 4-5 4z" /></svg>
    <Ico size={13} className="mt-[10px]"><Eyedropper dim /></Ico>
    <Chevron d="M0 7l4.500-5L9 7" className="mt-[6px] text-[#ccc]" />
    <div className="mt-[5px] flex min-h-0 w-[18px] flex-1 flex-col overflow-hidden border-x border-t border-[#555]">
      <NoColour className="h-4 w-4 shrink-0" />
      {palette.map((c) => (
        <span key={c} className="h-[17px] w-4 shrink-0 border-t border-[#555]" style={{ backgroundColor: c }} />
      ))}
    </div>
    <div className="flex h-[42px] shrink-0 flex-col items-center gap-[9px] pt-1">
      <Chevron d="M0 2l4.500 5L9 2" className="text-[#999]" />
      <Chevron d="M0 0l4 4.500L0 9M5 0l4 4.500L5 9" className="text-[#999]" />
    </div>
  </aside>
)

const StatusBar = () => (
  <footer className="flex h-[37px] shrink-0 items-center border-t border-[#d4d4d4] bg-[#f3f3f3] pr-3 pl-[10px] text-[13px] whitespace-nowrap">
    <button type="button" aria-label="状态栏选项" className="relative mr-2"><Ico size={18} box={18}><Gear cx={9} cy={9} r={5} w={2} /></Ico>
      <Corner className="-right-[2px] -bottom-[2px]" /></button>
    <span>单击并拖动可添加段落文本</span>
    <p className="ml-7 flex items-center">
      <span className="w-[42px]">宽度：</span><span className="w-[46px] text-[11px]">159.173</span>
      <span className="w-[42px]">高度：</span><span className="w-[45px] text-[11px]">166.370</span>
      <span>毫米</span>
    </p>
    <div className="ml-auto flex items-center">
      <Ico><Bucket /></Ico>
      <NoColour className="mr-1 h-[22px] w-[22px] border border-[#ccc]" />
      <span className="w-[163px]">无</span>
      <Ico size={12} className="mr-px text-[#2f2f2f]"><path d="M8 .5L4.500 7 6.500 11.500h3L11.500 7zM5.500 11.500h5v4h-5z" /></Ico>
      <span className="mr-[5px] h-5 w-5 bg-[#231a16]" />
      <span className="flex w-[216px] text-xs text-[#222]">
        <span className="w-6">C:</span><span className="w-3">0</span>
        <span className="w-6">M:</span><span className="w-3">0</span>
        <span className="w-5">Y:</span><span className="w-3">0</span>
        <span className="w-5">K:</span><span>100</span>
      </span>
      <Ico className="text-[#333]"><path d="M.5 1.500h14v10H.5zM3 14.500h9" /><path d="M5 6h5v4H5z" fill="#d33" /><path d="M6 6V4h3v2" /></Ico>
    </div>
  </footer>
)

const Watermark = () => (
  <div className="pointer-events-none absolute right-0 bottom-[5px] flex h-[114px] w-[475px] bg-white/60 pl-3">
    <div className="flex w-[264px] shrink-0 flex-col whitespace-nowrap">
      <p className="-ml-[2px] font-['Noto_Sans_CJK_SC',sans-serif] text-[50px] leading-[58px] font-bold text-[#ff2d2d]">电脑技术网</p>
      <p className="font-['Liberation_Serif',serif] text-[37px] leading-[64px] font-bold text-[#2b7fff]">www.tagxp.com</p>
    </div>
    <div className="h-[114px] w-[189px] rounded-[26px] bg-[#1473ff]/88 text-center font-['Noto_Sans_CJK_SC',sans-serif] text-[90px] leading-[98px] font-bold whitespace-nowrap text-white">TAG</div>
    <div className="absolute right-2 bottom-1 flex items-center gap-1 whitespace-nowrap text-[#1c64d8]/40">
      <svg width="38" height="34" viewBox="0 0 38 34" fill="none" stroke="currentColor" strokeWidth="3" aria-hidden="true"><path d="M2 28C-2 10 18 2 36 4 24 8 14 14 12 24M14 30q18 0 18-18" /></svg>
      <p className="text-[21px] leading-6 font-bold">极光下载站<span className="block text-sm leading-4">www.xz7.com</span></p>
    </div>
  </div>
)

const App = () => (
  <div className={`relative flex h-screen flex-col overflow-hidden bg-white text-black ${fontStack}`}>
    <TitleBar />
    <MenuBar />
    <StandardBar />
    <PropertyBar />
    <main className="flex min-h-0 flex-1">
      <Toolbox />
      <section className="flex min-w-0 flex-1 flex-col">
        <DocTabs />
        <TopRuler />
        <div className="flex min-h-0 flex-1">
          <LeftRuler />
          <div className="flex min-w-0 flex-1 flex-col">
            <div className="flex min-h-0 flex-1">
              <Canvas />
              <div className="flex w-4 shrink-0 flex-col items-center bg-white">
                <button type="button" aria-label="向上滚动" className="flex h-[17px] w-4 shrink-0 items-center justify-center bg-[#f0f0f0]"><Chevron d="M1 7l3.500-4L8 7" className="text-[#555]" /></button>
                <span className="w-4 flex-1" />
                <span className="mb-1 h-[399px] w-4 border-r border-white bg-[#cdcdcd]" />
                <span className="w-4 flex-1" />
                <button type="button" aria-label="向下滚动" className="flex h-[17px] w-4 shrink-0 items-center justify-center bg-[#f0f0f0]"><Chevron d="M1 2l3.500 4L8 2" className="text-[#555]" /></button>
              </div>
            </div>
            <PageBar />
          </div>
        </div>
        <DocumentPalette />
      </section>
      <ColourPalette />
    </main>
    <StatusBar />
    <button type="button" className="absolute right-[519px] bottom-[22px] flex h-[26px] w-[62px] items-center justify-center gap-1 rounded-md border border-[#888] bg-white text-[13px] whitespace-nowrap text-[#333] shadow-md shadow-black/50">
      EN
      <Ico size={11} box={12}><path d="M6 .5A5.500 5.500 0 1 1 1 9.500 6 6 0 0 0 6 .5z" /></Ico>
      简
    </button>
    <Watermark />
  </div>
)

export default App
